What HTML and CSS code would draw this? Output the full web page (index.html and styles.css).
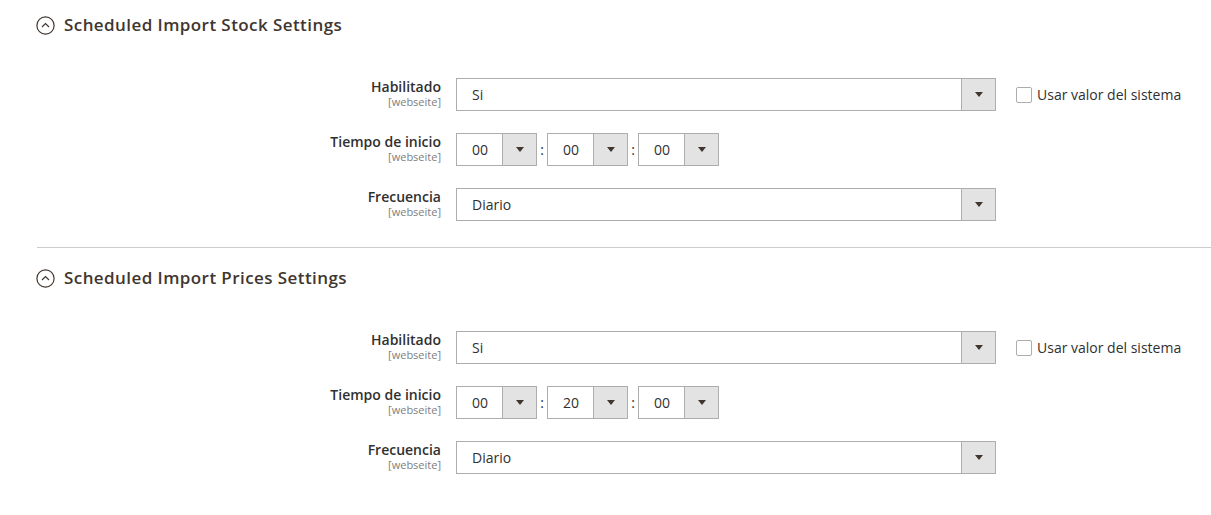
FILE: index.html
```html
<!DOCTYPE html>
<html lang="es">
<head>
<meta charset="utf-8">
<title>Scheduled Import Settings</title>
<link rel="stylesheet" href="styles.css">
</head>
<body>
<div class="page">
  <section class="group group-first">
    <div class="group-head">
      <span class="toggle"><svg viewBox="0 0 19 19" width="19" height="19"><circle cx="9.5" cy="9.5" r="8.6" fill="none" stroke="#41362f" stroke-width="1.2"/><path d="M6 11 L9.5 7.5 L13 11" fill="none" stroke="#41362f" stroke-width="1.2"/></svg></span>
      <h2 class="group-title">Scheduled Import Stock Settings</h2>
    </div>
    <div class="fields">
      <div class="row">
        <div class="label"><span class="label-text">Habilitado</span><span class="scope">[webseite]</span></div>
        <div class="control wide"><span class="value">Si</span><span class="arrow"><svg viewBox="0 0 8 5" width="8" height="5"><path d="M0 0 H8 L4 5 Z" fill="#41362f"/></svg></span></div>
        <label class="inherit"><span class="checkbox"></span><span class="inherit-text">Usar valor del sistema</span></label>
      </div>
      <div class="row">
        <div class="label"><span class="label-text">Tiempo de inicio</span><span class="scope">[webseite]</span></div>
        <div class="time">
          <div class="control small"><span class="value">00</span><span class="arrow"><svg viewBox="0 0 8 5" width="8" height="5"><path d="M0 0 H8 L4 5 Z" fill="#41362f"/></svg></span></div>
          <span class="colon">:</span>
          <div class="control small"><span class="value">00</span><span class="arrow"><svg viewBox="0 0 8 5" width="8" height="5"><path d="M0 0 H8 L4 5 Z" fill="#41362f"/></svg></span></div>
          <span class="colon">:</span>
          <div class="control small"><span class="value">00</span><span class="arrow"><svg viewBox="0 0 8 5" width="8" height="5"><path d="M0 0 H8 L4 5 Z" fill="#41362f"/></svg></span></div>
        </div>
      </div>
      <div class="row">
        <div class="label"><span class="label-text">Frecuencia</span><span class="scope">[webseite]</span></div>
        <div class="control wide"><span class="value">Diario</span><span class="arrow"><svg viewBox="0 0 8 5" width="8" height="5"><path d="M0 0 H8 L4 5 Z" fill="#41362f"/></svg></span></div>
      </div>
    </div>
  </section>
  <hr class="divider">
  <section class="group">
    <div class="group-head">
      <span class="toggle"><svg viewBox="0 0 19 19" width="19" height="19"><circle cx="9.5" cy="9.5" r="8.6" fill="none" stroke="#41362f" stroke-width="1.2"/><path d="M6 11 L9.5 7.5 L13 11" fill="none" stroke="#41362f" stroke-width="1.2"/></svg></span>
      <h2 class="group-title">Scheduled Import Prices Settings</h2>
    </div>
    <div class="fields">
      <div class="row">
        <div class="label"><span class="label-text">Habilitado</span><span class="scope">[webseite]</span></div>
        <div class="control wide"><span class="value">Si</span><span class="arrow"><svg viewBox="0 0 8 5" width="8" height="5"><path d="M0 0 H8 L4 5 Z" fill="#41362f"/></svg></span></div>
        <label class="inherit"><span class="checkbox"></span><span class="inherit-text">Usar valor del sistema</span></label>
      </div>
      <div class="row">
        <div class="label"><span class="label-text">Tiempo de inicio</span><span class="scope">[webseite]</span></div>
        <div class="time">
          <div class="control small"><span class="value">00</span><span class="arrow"><svg viewBox="0 0 8 5" width="8" height="5"><path d="M0 0 H8 L4 5 Z" fill="#41362f"/></svg></span></div>
          <span class="colon">:</span>
          <div class="control small"><span class="value">20</span><span class="arrow"><svg viewBox="0 0 8 5" width="8" height="5"><path d="M0 0 H8 L4 5 Z" fill="#41362f"/></svg></span></div>
          <span class="colon">:</span>
          <div class="control small"><span class="value">00</span><span class="arrow"><svg viewBox="0 0 8 5" width="8" height="5"><path d="M0 0 H8 L4 5 Z" fill="#41362f"/></svg></span></div>
        </div>
      </div>
      <div class="row">
        <div class="label"><span class="label-text">Frecuencia</span><span class="scope">[webseite]</span></div>
        <div class="control wide"><span class="value">Diario</span><span class="arrow"><svg viewBox="0 0 8 5" width="8" height="5"><path d="M0 0 H8 L4 5 Z" fill="#41362f"/></svg></span></div>
      </div>
    </div>
  </section>
</div>
</body>
</html>
```
FILE: styles.css
```css
* { box-sizing: border-box; }
html, body { margin: 0; padding: 0; background: #fff; }
body {
  font-family: "Open Sans", "Liberation Sans", sans-serif;
  color: #303030;
  font-size: 14px;
}
.page { width: 1211px; }
.group { padding: 12px 0 26px 0; }
.group-head {
  display: flex;
  align-items: center;
  height: 26px;
  padding-left: 36px;
  gap: 9px;
}
.toggle { display: flex; width: 19px; height: 19px; }
.group-title {
  margin: 0;
  font-size: 17px;
  line-height: 26px;
  font-weight: 600;
  letter-spacing: 0.025em;
  color: #41362f;
}
.fields {
  margin-top: 40px;
  display: flex;
  flex-direction: column;
  gap: 22px;
}
.row {
  display: flex;
  align-items: flex-start;
  height: 33px;
}
.label {
  width: 441px;
  margin-right: 15px;
  display: flex;
  flex-direction: column;
  align-items: flex-end;
  margin-top: -1px;
}
.label-text {
  font-weight: 600;
  font-size: 14px;
  line-height: 19px;
  color: #303030;
}
.scope {
  font-size: 11px;
  line-height: 11px;
  color: #808080;
}
.control {
  display: flex;
  height: 33px;
  border: 1px solid #adadad;
  background: #fff;
}
.control.wide { width: 540px; }
.control.small { width: 81px; }
.value {
  flex: 1;
  padding-left: 15px;
  line-height: 31px;
  font-size: 14px;
  color: #303030;
}
.arrow {
  width: 34px;
  background: #e3e3e3;
  border-left: 1px solid #adadad;
  display: flex;
  align-items: center;
  justify-content: center;
}
.arrow svg { display: block; }
.time { display: flex; align-items: center; height: 33px; }
.colon {
  width: 10px;
  text-align: center;
  font-size: 14px;
  color: #303030;
}
.inherit {
  display: flex;
  align-items: center;
  height: 33px;
  margin-left: 20px;
  gap: 5px;
}
.checkbox {
  width: 16px;
  height: 16px;
  border: 1px solid #adadad;
  border-radius: 2px;
  background: #fff;
}
.inherit-text { font-size: 14px; color: #303030; }
.divider {
  margin: 0 0 5px 37px;
  border: 0;
  border-top: 1px solid #cccccc;
  height: 0;
}
```
